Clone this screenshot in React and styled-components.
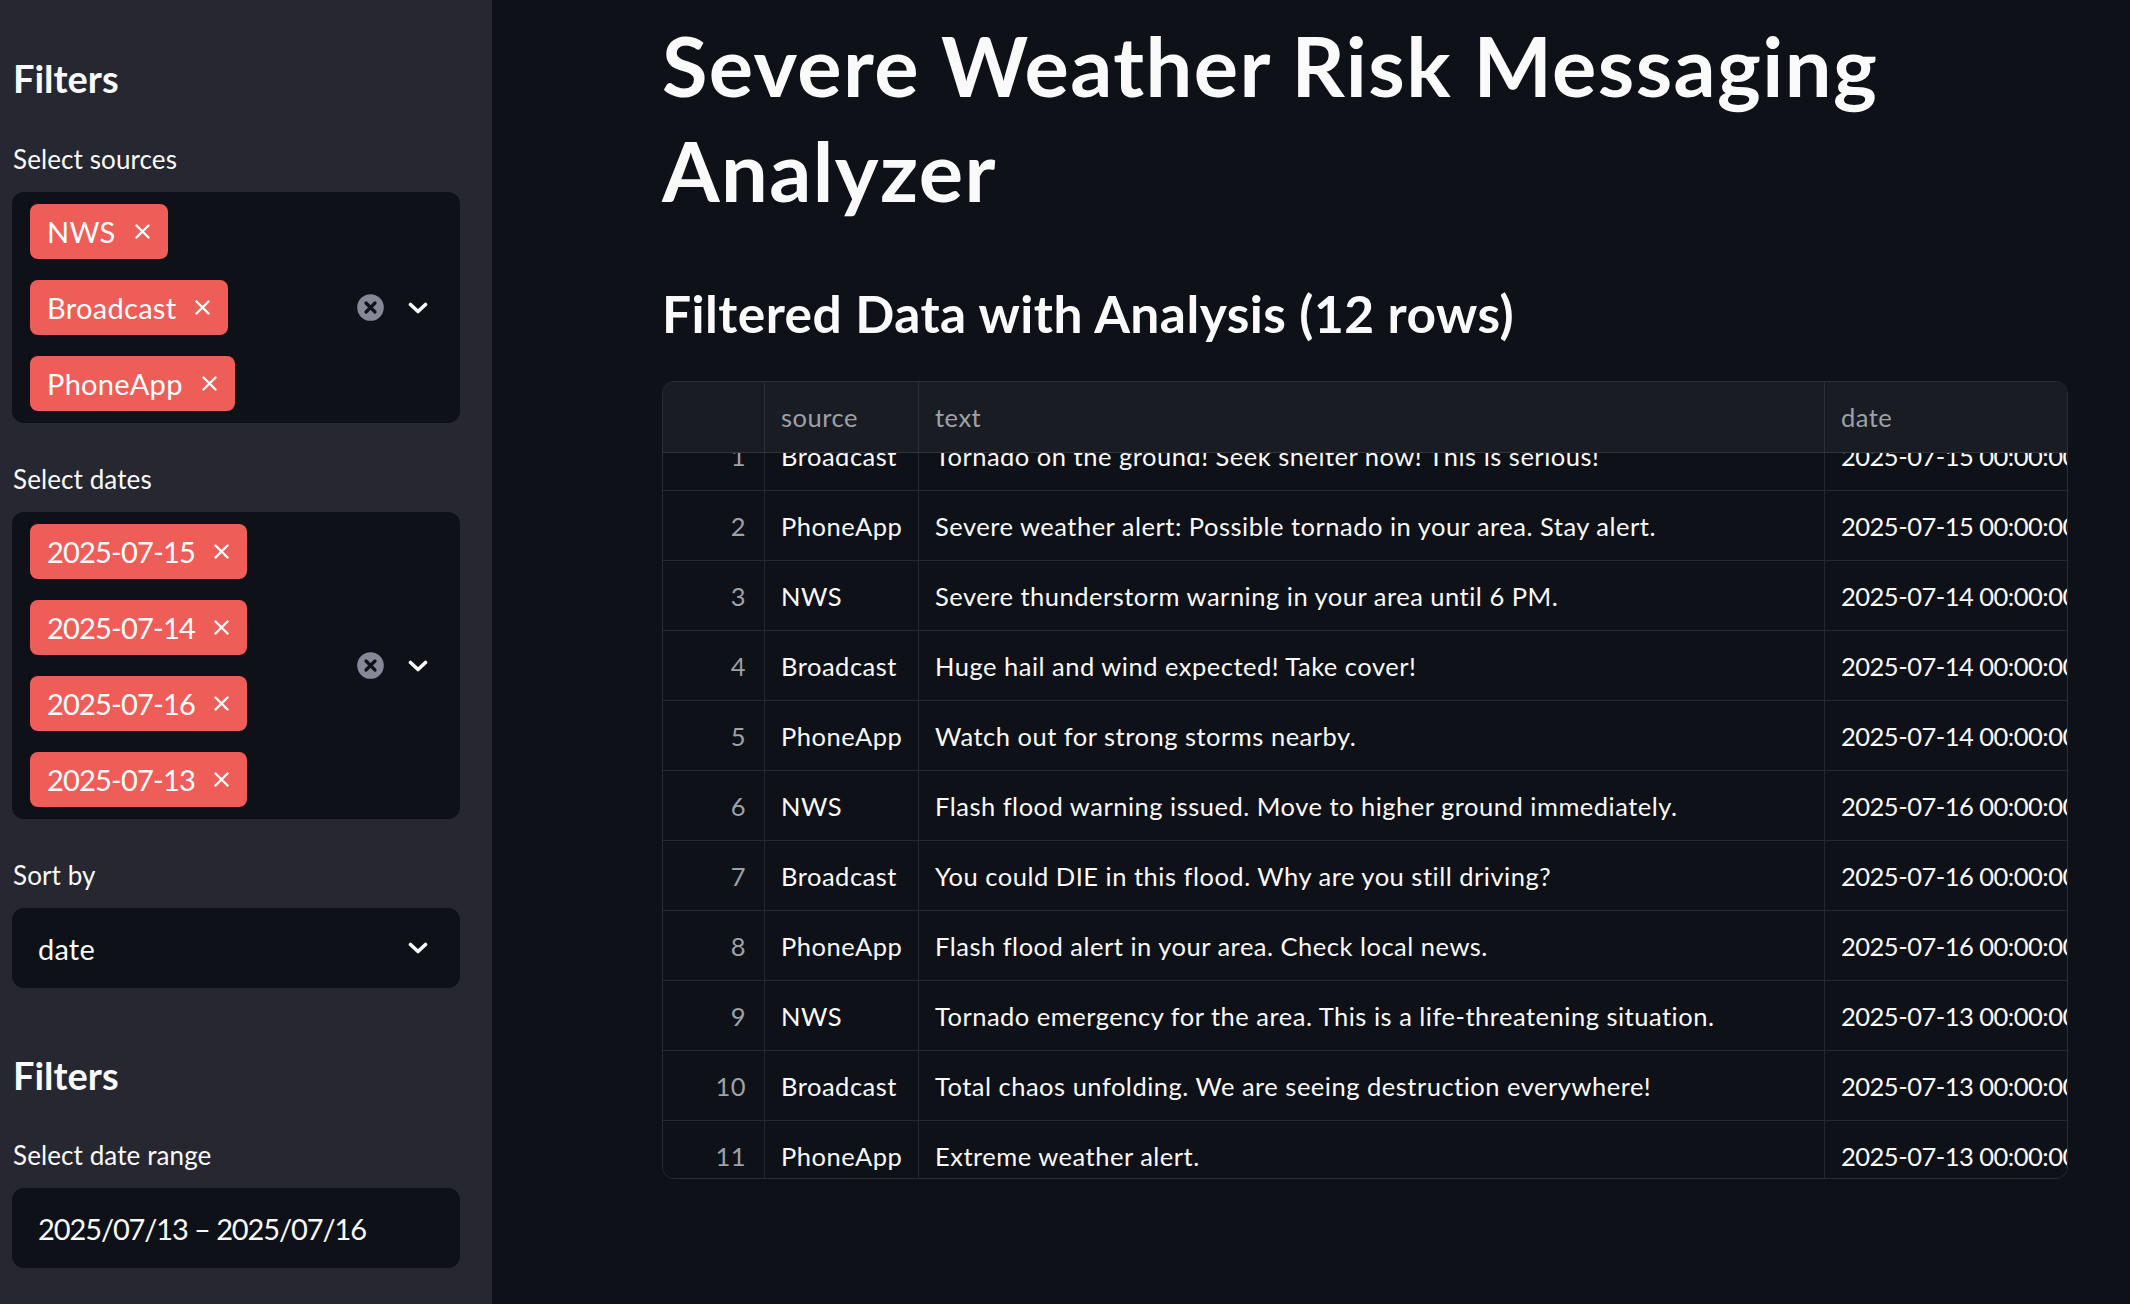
import React, { useLayoutEffect, useRef } from "react";
import styled, { createGlobalStyle } from "styled-components";

const GlobalStyle = createGlobalStyle`
  html, body { margin: 0; padding: 0; background: #0e1117; }
  body { font-family: Lato, "Noto Sans", sans-serif; color: #fafafa; }
  * { box-sizing: border-box; }
`;

const Page = styled.div`
  display: flex;
  width: 100%;
  height: 1304px;
  overflow: hidden;
  background: #0e1117;
`;

const Sidebar = styled.aside`
  width: 492px;
  flex-shrink: 0;
  background: #262730;
  padding: 55px 32px 0 12px;
  display: flex;
  flex-direction: column;
`;

const SideHeading = styled.h2`
  margin: ${(p) => p.$top || 0}px 0 0 1px;
  font-size: 38px;
  font-weight: 700;
  line-height: 46px;
  color: #fafafa;
`;

const Field = styled.div`
  margin-top: ${(p) => p.$top}px;
  display: flex;
  flex-direction: column;
`;

const Label = styled.label`
  font-size: 26px;
  line-height: 31px;
  margin: 1px 0 17px 1px;
  color: #fafafa;
  letter-spacing: 0.1px;
`;

const InputBox = styled.div`
  background: #0e1117;
  border-radius: 12px;
  display: flex;
  align-items: center;
  min-height: 80px;
  padding: ${(p) => (p.$multi ? "12px 32px 12px 18px" : "0 32px 0 26px")};
`;

const TagList = styled.div`
  flex: 1;
  display: flex;
  flex-direction: column;
  align-items: flex-start;
  gap: 21px;
`;

const Tag = styled.span`
  display: inline-flex;
  align-items: center;
  height: 55px;
  padding: 0 18px 0 17px;
  gap: 19px;
  border-radius: 8px;
  background: #ef5d58;
  color: #ffffff;
  font-size: 29px;
  line-height: 1;
  letter-spacing: ${(p) => (p.$numeric ? "-0.8px" : "0.3px")};
`;

const ValueText = styled.span`
  flex: 1;
  font-size: 29px;
  color: #fafafa;
  letter-spacing: ${(p) => (p.$numeric ? "-1.1px" : "0.2px")};
`;

const Indicators = styled.div`
  display: flex;
  align-items: center;
  gap: 24px;
`;

const Main = styled.main`
  flex: 1;
  padding: 13px 62px 0 170px;
  min-width: 0;
`;

const Title = styled.h1`
  margin: 0;
  font-size: 83px;
  font-weight: 700;
  line-height: 105px;
  letter-spacing: 1.4px;
  color: #fafafa;
`;

const SubHeading = styled.h3`
  margin: 59px 0 0;
  font-size: 51.5px;
  font-weight: 700;
  line-height: 62px;
  letter-spacing: 0.45px;
  color: #fafafa;
`;

const Table = styled.div`
  margin-top: 37px;
  width: 1406px;
  border: 1px solid #2b2d36;
  border-radius: 12px;
  overflow: hidden;
  background: #0e1117;
`;

const Row = styled.div`
  display: grid;
  grid-template-columns: 102px 154px 906px 320px;
  border-bottom: 1px solid ${(p) => (p.$head ? "#33353e" : "#262830")};
  background: ${(p) => (p.$head ? "#1a1c24" : "#0e1117")};
  height: ${(p) => (p.$head ? 71 : 70)}px;
`;

const Cell = styled.div`
  display: flex;
  align-items: center;
  justify-content: ${(p) => (p.$index ? "flex-end" : "flex-start")};
  padding: ${(p) => (p.$index ? "0 18px 0 0" : "0 16px")};
  border-right: 1px solid ${(p) => (p.$head ? "#2d2f38" : "#262830")};
  font-size: 25.5px;
  letter-spacing: ${(p) => (p.$numeric ? "-0.5px" : "0.5px")};
  white-space: nowrap;
  color: ${(p) => (p.$muted ? "#9ea1a9" : "#fafafa")};
`;

const Body = styled.div`
  height: 725px;
  overflow: hidden;
`;

const Chevron = () => (
  <svg width="20" height="12" viewBox="0 0 20 12" fill="none">
    <path d="M2.5 2.5 L10 9.5 L17.5 2.5" stroke="#fafafa" strokeWidth="3.6" strokeLinecap="round" strokeLinejoin="round" />
  </svg>
);

const ClearIcon = () => (
  <svg width="27" height="27" viewBox="0 0 27 27">
    <circle cx="13.5" cy="13.5" r="13.3" fill="#868897" />
    <path d="M9 9 L18 18 M18 9 L9 18" stroke="#0e1117" strokeWidth="3.2" strokeLinecap="round" />
  </svg>
);

const TagClose = () => (
  <svg width="15" height="15" viewBox="0 0 15 15">
    <path d="M1.5 1.5 L13.5 13.5 M13.5 1.5 L1.5 13.5" stroke="#ffffff" strokeWidth="2.4" strokeLinecap="round" />
  </svg>
);

const MultiSelect = ({ values, numeric }) => (
  <InputBox $multi>
    <TagList>
      {values.map((v) => (
        <Tag key={v} $numeric={numeric}>
          {v}
          <TagClose />
        </Tag>
      ))}
    </TagList>
    <Indicators>
      <ClearIcon />
      <Chevron />
    </Indicators>
  </InputBox>
);

const rows = [
  ["NWS", "Tornado warning in effect for your county. Take shelter now.", "2025-07-15"],
  ["Broadcast", "Tornado on the ground! Seek shelter now! This is serious!", "2025-07-15"],
  ["PhoneApp", "Severe weather alert: Possible tornado in your area. Stay alert.", "2025-07-15"],
  ["NWS", "Severe thunderstorm warning in your area until 6 PM.", "2025-07-14"],
  ["Broadcast", "Huge hail and wind expected! Take cover!", "2025-07-14"],
  ["PhoneApp", "Watch out for strong storms nearby.", "2025-07-14"],
  ["NWS", "Flash flood warning issued. Move to higher ground immediately.", "2025-07-16"],
  ["Broadcast", "You could DIE in this flood. Why are you still driving?", "2025-07-16"],
  ["PhoneApp", "Flash flood alert in your area. Check local news.", "2025-07-16"],
  ["NWS", "Tornado emergency for the area. This is a life-threatening situation.", "2025-07-13"],
  ["Broadcast", "Total chaos unfolding. We are seeing destruction everywhere!", "2025-07-13"],
  ["PhoneApp", "Extreme weather alert.", "2025-07-13"],
];

const DataTable = () => {
  const bodyRef = useRef(null);
  useLayoutEffect(() => {
    if (bodyRef.current) bodyRef.current.scrollTop = 102;
  }, []);
  return (
    <Table>
      <Row $head>
        <Cell $head $index />
        <Cell $head $muted>source</Cell>
        <Cell $head $muted>text</Cell>
        <Cell $head $muted>date</Cell>
      </Row>
      <Body ref={bodyRef}>
        {rows.map((r, i) => (
          <Row key={i}>
            <Cell $index $muted>{i}</Cell>
            <Cell>{r[0]}</Cell>
            <Cell>{r[1]}</Cell>
            <Cell $numeric>{r[2]} 00:00:00</Cell>
          </Row>
        ))}
      </Body>
    </Table>
  );
};

export default function App() {
  return (
    <>
      <GlobalStyle />
      <Page>
        <Sidebar>
          <SideHeading>Filters</SideHeading>
          <Field $top={42}>
            <Label>Select sources</Label>
            <MultiSelect values={["NWS", "Broadcast", "PhoneApp"]} />
          </Field>
          <Field $top={40}>
            <Label>Select dates</Label>
            <MultiSelect numeric values={["2025-07-15", "2025-07-14", "2025-07-16", "2025-07-13"]} />
          </Field>
          <Field $top={40}>
            <Label>Sort by</Label>
            <InputBox>
              <ValueText>date</ValueText>
              <Chevron />
            </InputBox>
          </Field>
          <SideHeading $top={64}>Filters</SideHeading>
          <Field $top={41}>
            <Label>Select date range</Label>
            <InputBox>
              <ValueText $numeric>2025/07/13 – 2025/07/16</ValueText>
            </InputBox>
          </Field>
        </Sidebar>
        <Main>
          <Title>Severe Weather Risk Messaging Analyzer</Title>
          <SubHeading>Filtered Data with Analysis (12 rows)</SubHeading>
          <DataTable />
        </Main>
      </Page>
    </>
  );
}
